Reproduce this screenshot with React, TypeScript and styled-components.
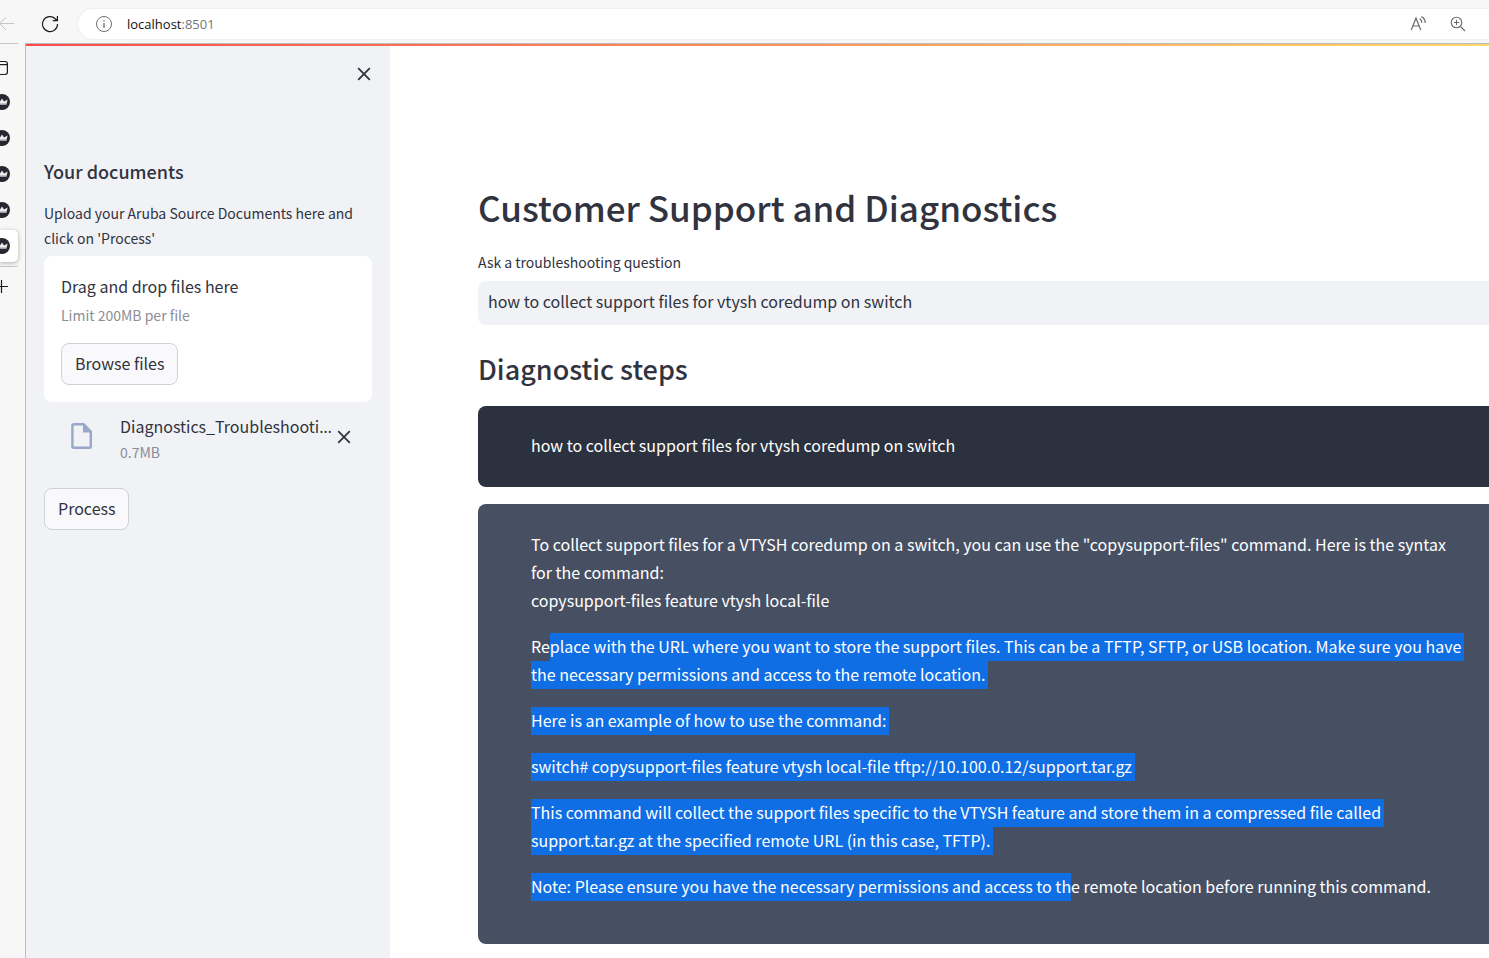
import React from "react";
import styled, { createGlobalStyle, css } from "styled-components";

const GlobalStyle = createGlobalStyle`
  *, *::before, *::after { box-sizing: border-box; }
  body {
    margin: 0;
    background: #fff;
    color: #31333f;
    font-family: "Noto Sans CJK SC", "Noto Sans", sans-serif;
    font-size: 16px;
    line-height: 28px;
  }
  h1, h2, h3, p { margin: 0; }
  button { font: inherit; color: inherit; cursor: pointer; }
`;

const Shell = styled.div`
  display: flex;
  flex-direction: column;
  min-height: 100vh;
  overflow: hidden;
  background: #f7f7f7;
`;

/* Browser toolbar */
const Toolbar = styled.header`
  display: flex;
  align-items: center;
  height: 43px;
  padding-top: 5px;
`;

const GlyphButton = styled.button<{ $w: number; $h?: number }>`
  display: flex;
  align-items: center;
  justify-content: center;
  flex: none;
  width: ${(p) => p.$w}px;
  height: ${(p) => p.$h ?? p.$w}px;
  padding: 0;
  border: 0;
  background: none;
  svg { display: block; flex: none; }
`;

const ToolbarNav = styled.div`
  display: flex;
  align-items: center;
  width: 78px;
  gap: 20px;
`;

const AddressBar = styled.div`
  display: flex;
  align-items: center;
  flex: 1;
  height: 30px;
  padding: 0 16px 0 11px;
  border-radius: 15px 0 0 15px;
  background: #fff;
  box-shadow: 0 0 3px rgba(0, 0, 0, 0.08);
`;

const UrlText = styled.a`
  flex: 1;
  margin-left: 8px;
  font-family: "Open Sans", sans-serif;
  font-size: 13px;
  color: #767676;
  text-decoration: none;
  strong { font-weight: 400; color: #111; }
`;

const Tools = styled.div`
  display: flex;
  gap: 10px;
`;

const Body = styled.div`
  display: flex;
  flex: 1;
`;

/* Vertical tab strip */
const Rail = styled.nav`
  display: flex;
  flex-direction: column;
  width: 25px;
  flex: none;
  overflow: hidden;
`;

const RailRule = styled.hr<{ $spaced?: boolean }>`
  width: 18px;
  height: 1px;
  margin: ${(p) => (p.$spaced ? "2px 0 1px" : "0")};
  border: 0;
  background: #c8c8c8;
`;

const RailButton = styled.button<{ $active?: boolean }>`
  display: flex;
  align-items: center;
  width: 18px;
  height: 32px;
  margin: 2px 0;
  padding: 0;
  border: 0;
  border-radius: 0 5px 5px 0;
  background: none;
  svg { display: block; }
  ${(p) =>
    p.$active &&
    css`
      background: #fff;
      box-shadow: 0 1px 4px rgba(0, 0, 0, 0.3);
    `}
`;

const RailTop = styled.div`
  height: 40px;
  padding-top: 6px;
`;

const Page = styled.div`
  display: flex;
  flex-direction: column;
  flex: 1;
  min-width: 0;
  border-top: 1px solid #bbb;
  border-left: 1px solid #bbb;
  background: #fff;
`;

const Decoration = styled.div`
  height: 2px;
  flex: none;
  background: linear-gradient(90deg, #ff4b4b, #ffd76a);
`;

const Columns = styled.div`
  display: flex;
  flex: 1;
`;

const Sidebar = styled.aside`
  display: flex;
  flex-direction: column;
  align-items: flex-start;
  width: 364px;
  flex: none;
  padding: 14px 18px;
  background: #f0f2f6;
`;

const SidebarTop = styled.div`
  display: flex;
  justify-content: flex-end;
  width: 100%;
  height: 97px;
`;

const SidebarTitle = styled.h3`
  font-size: 18px;
  font-weight: 500;
  line-height: 28px;
`;

const UploadText = styled.p`
  margin-top: 16px;
  font-size: 14px;
  line-height: 25px;
`;

const Dropzone = styled.section`
  width: 100%;
  margin-top: 5px;
  padding: 16px 17px 17px;
  border-radius: 8px;
  background: #fff;
`;

const Hint = styled.p`
  font-size: 14px;
  line-height: 25px;
  color: #8b8d97;
`;

const LimitHint = styled(Hint)`
  margin-top: 3px;
`;

const Button = styled.button`
  height: 42px;
  padding: 0 13px 2px;
  border: 1px solid #d0d1d6;
  border-radius: 8px;
  background: #f9f9fb;
  line-height: 28px;
`;

const BrowseButton = styled(Button)`
  display: block;
  margin-top: 15px;
`;

const FileRow = styled.div`
  display: flex;
  align-items: flex-start;
  width: 100%;
  margin: 10px 0 23px;
  padding: 0 18px 0 25px;
`;

const FileGlyph = styled.div`
  display: flex;
  align-items: center;
  height: 48px;
`;

const FileMeta = styled.div`
  flex: 1;
  min-width: 0;
  margin-left: 25px;
`;

const FileName = styled.div`
  white-space: nowrap;
`;

const Ellipsis = styled.span`
  font-family: "Noto Sans", sans-serif;
  line-height: 1;
`;

const Main = styled.main`
  flex: 1;
  min-width: 0;
  padding: 133px 0 14px 88px;
`;

const Title = styled.h1`
  font-size: 35px;
  font-weight: 500;
  line-height: 56px;
`;

const QuestionLabel = styled.label`
  display: block;
  margin-top: 14px;
  font-size: 14px;
  line-height: 26px;
`;

const QuestionInput = styled.input`
  display: block;
  width: 100%;
  height: 44px;
  margin-top: 6px;
  padding: 0 10px 4px;
  border: 0;
  border-radius: 8px 0 0 8px;
  outline: 0;
  background: #f0f2f6;
  color: #31333f;
  font: inherit;
`;

const Subtitle = styled.h2`
  margin: 24px 0 17px;
  font-size: 27px;
  font-weight: 500;
  line-height: 40px;
`;

const Message = styled.article<{ $bot?: boolean }>`
  display: flex;
  flex-direction: column;
  gap: 18px;
  padding: ${(p) => (p.$bot ? "26px 0 44px 53px" : "25px 0 28px 53px")};
  border-radius: 8px 0 0 8px;
  background: ${(p) => (p.$bot ? "#475063" : "#2b313e")};
  color: #fff;
  & + & { margin-top: 17px; }
`;

const Selected = styled.mark<{ $open?: boolean }>`
  padding: 1px ${(p) => (p.$open ? 0 : 3)}px 3px 0;
  background: #0f6ee4;
  color: #fff;
  box-decoration-break: clone;
  -webkit-box-decoration-break: clone;
`;

const BackIcon = () => (
  <svg width="14" height="16" viewBox="0 0 14 16" fill="none" stroke="#c6c6c6">
    <path d="M14 7.5H-1M6 1.5L-.5 7.5L6 14" />
  </svg>
);

const RefreshIcon = () => (
  <svg width="18" height="18" viewBox="0 0 18 18" fill="none" stroke="#1b1b1b" strokeWidth="1.2">
    <path d="M16.5 9A7.5 7.5 0 1 1 14.2 3.7L16 5.5M16.4 1v4.6h-4.6" />
  </svg>
);

const InfoIcon = () => (
  <svg width="18" height="18" viewBox="0 0 18 18" fill="none" stroke="#6e6e6e">
    <circle cx="9" cy="9" r="7.5" />
    <path d="M9 8v5" strokeWidth="1.3" />
    <circle cx="9" cy="5.7" r=".8" fill="#6e6e6e" stroke="none" />
  </svg>
);

const ReadAloudIcon = () => (
  <svg width="18" height="18" viewBox="0 0 18 18" fill="none" stroke="#6b6b6b" strokeWidth="1.2">
    <path d="M2.2 15L7 3.2L11.8 15M3.8 11h6.6M10.6 3.4Q12.9 5 12.8 7.8M12.4 1.6Q16.4 3.8 16.2 8" />
  </svg>
);

const ZoomIcon = () => (
  <svg width="18" height="18" viewBox="0 0 18 18" fill="none" stroke="#6b6b6b" strokeWidth="1.1">
    <circle cx="7.5" cy="7.5" r="5.3" />
    <path d="M11.5 11.5L16 16M7.5 4.8v5.4M4.8 7.5h5.4" />
  </svg>
);

const TabMenuIcon = () => (
  <svg width="10" height="16" viewBox="0 0 10 16" fill="none" stroke="#1b1b1b" strokeWidth="1.2">
    <rect x="-6" y="1.5" width="13.4" height="13" rx="2.4" />
    <path d="M-6 4.6H7.4" />
  </svg>
);

const CrownIcon = () => (
  <svg width="12" height="16" viewBox="0 0 12 16">
    <circle cx="2" cy="8" r="8" fill="#262730" />
    <path d="M-4 5L0 7.4L2 4.6L4 7.4L7.6 5.6L6.4 10.6H-2Z" fill="#ededed" />
    <path d="M-2 9.2H6.7L6.4 10.6H-2Z" fill="#b5b5b5" />
  </svg>
);

const PlusIcon = () => (
  <svg width="10" height="16" viewBox="0 0 10 16" stroke="#1b1b1b" strokeWidth="1.2">
    <path d="M-5 8.5H8M1.5 2v13" />
  </svg>
);

const CloseIcon = () => (
  <svg width="14" height="14" viewBox="0 0 14 14" fill="none" stroke="#31333f" strokeWidth="1.8">
    <path d="M1.2 1.2L12.8 12.8M12.8 1.2L1.2 12.8" />
  </svg>
);

const FileIcon = () => (
  <svg width="26" height="28" viewBox="0 0 26 28">
    <path
      d="M5 2.2H14.5L21.8 9.5V24.5Q21.8 25.8 20.5 25.8H5Q3.4 25.8 3.4 24.5V3.5Q3.4 2.2 5 2.2Z"
      fill="none"
      stroke="#98a7c9"
      strokeWidth="2.4"
      strokeLinejoin="round"
    />
    <path d="M14 2V10.5H22.4Z" fill="#98a7c9" />
  </svg>
);

const tabs = [1, 2, 3, 4, 5];

export default function App() {
  return (
    <Shell>
      <GlobalStyle />
      <Toolbar>
        <ToolbarNav>
          <GlyphButton $w={14} $h={18} aria-label="Back"><BackIcon /></GlyphButton>
          <GlyphButton $w={32} $h={30} aria-label="Refresh"><RefreshIcon /></GlyphButton>
        </ToolbarNav>
        <AddressBar>
          <GlyphButton $w={30} aria-label="Site information"><InfoIcon /></GlyphButton>
          <UrlText href="http://localhost:8501"><strong>localhost</strong>:8501</UrlText>
          <Tools>
            <GlyphButton $w={30} aria-label="Read aloud"><ReadAloudIcon /></GlyphButton>
            <GlyphButton $w={30} aria-label="Zoom"><ZoomIcon /></GlyphButton>
          </Tools>
        </AddressBar>
      </Toolbar>
      <Body>
        <Rail aria-label="Tabs">
          <RailRule />
          <RailTop>
            <RailButton aria-label="Tab actions"><TabMenuIcon /></RailButton>
          </RailTop>
          {tabs.map((n) => (
            <RailButton key={n} $active={n === tabs.length} aria-label={`Tab ${n}`}>
              <CrownIcon />
            </RailButton>
          ))}
          <RailRule $spaced />
          <RailButton aria-label="New tab"><PlusIcon /></RailButton>
        </Rail>
        <Page>
          <Decoration />
          <Columns>
            <Sidebar>
              <SidebarTop>
                <GlyphButton $w={16} $h={28} aria-label="Close sidebar"><CloseIcon /></GlyphButton>
              </SidebarTop>
              <SidebarTitle>Your documents</SidebarTitle>
              <UploadText>
                Upload your Aruba Source Documents here and click on 'Process'
              </UploadText>
              <Dropzone>
                <p>Drag and drop files here</p>
                <LimitHint>Limit 200MB per file</LimitHint>
                <BrowseButton>Browse files</BrowseButton>
              </Dropzone>
              <FileRow>
                <FileGlyph><FileIcon /></FileGlyph>
                <FileMeta>
                  <FileName>Diagnostics_Troubleshooti<Ellipsis>…</Ellipsis></FileName>
                  <Hint>0.7MB</Hint>
                </FileMeta>
                <GlyphButton $w={20} $h={50} aria-label="Remove file"><CloseIcon /></GlyphButton>
              </FileRow>
              <Button>Process</Button>
            </Sidebar>
            <Main>
              <Title>Customer Support and Diagnostics</Title>
              <QuestionLabel htmlFor="question">Ask a troubleshooting question</QuestionLabel>
              <QuestionInput
                id="question"
                defaultValue="how to collect support files for vtysh coredump on switch"
              />
              <Subtitle>Diagnostic steps</Subtitle>
              <Message>
                <p>how to collect support files for vtysh coredump on switch</p>
              </Message>
              <Message $bot>
                <p>
                  To collect support files for a VTYSH coredump on a switch, you can use the
                  "copysupport-files" command. Here is the syntax
                  <br />
                  for the command:
                  <br />
                  copysupport-files feature vtysh local-file
                </p>
                <p>
                  Re
                  <Selected>
                    place with the URL where you want to store the support files. This can be a
                    TFTP, SFTP, or USB location. Make sure you have
                    <br />
                    the necessary permissions and access to the remote location.
                  </Selected>
                </p>
                <p><Selected>Here is an example of how to use the command:</Selected></p>
                <p>
                  <Selected>
                    switch# copysupport-files feature vtysh local-file
                    tftp://10.100.0.12/support.tar.gz
                  </Selected>
                </p>
                <p>
                  <Selected>
                    This command will collect the support files specific to the VTYSH feature and
                    store them in a compressed file called
                    <br />
                    support.tar.gz at the specified remote URL (in this case, TFTP).
                  </Selected>
                </p>
                <p>
                  <Selected $open>
                    Note: Please ensure you have the necessary permissions and access to th
                  </Selected>
                  e remote location before running this command.
                </p>
              </Message>
            </Main>
          </Columns>
        </Page>
      </Body>
    </Shell>
  );
}
